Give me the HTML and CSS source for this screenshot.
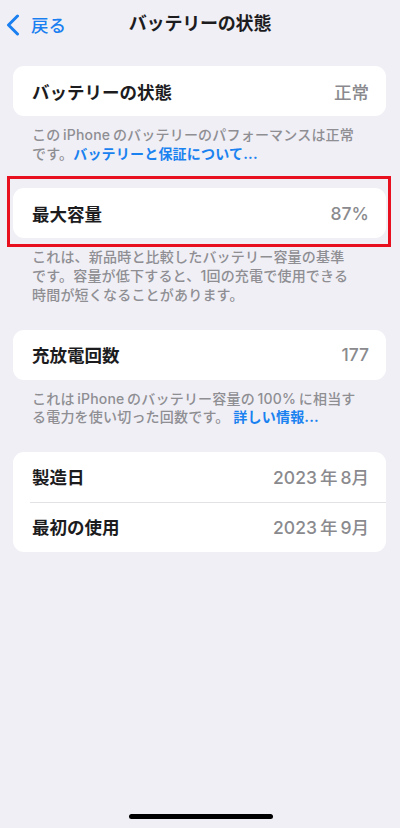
FILE: index.html
```html
<!DOCTYPE html>
<html lang="ja">
<head>
<meta charset="utf-8">
<link rel="stylesheet" href="styles.css">
</head>
<body>
<div class="screen">
  <header class="nav">
    <a class="back">
      <svg class="chev" viewBox="0 0 14 22" width="14" height="22"><path d="M11.5 2 L2.5 11 L11.5 20" fill="none" stroke="#1a7ff0" stroke-width="3" stroke-linecap="round" stroke-linejoin="round"/></svg>
      <span>戻る</span>
    </a>
    <h1 class="title">バッテリーの状態</h1>
  </header>

  <main class="content">
    <section class="group">
      <div class="card">
        <div class="row"><span class="label">バッテリーの状態</span><span class="value">正常</span></div>
      </div>
      <p class="note">この&thinsp;iPhone&thinsp;のバッテリーのパフォーマンスは正常<br>です。<span class="link">バッテリーと保証について...</span></p>
    </section>

    <section class="group">
      <div class="highlight-wrap">
        <div class="card">
          <div class="row"><span class="label">最大容量</span><span class="value">87%</span></div>
        </div>
        <div class="highlight"></div>
      </div>
      <p class="note">これは、新品時と比較したバッテリー容量の基準<br>です。容量が低下すると、1回の充電で使用できる<br>時間が短くなることがあります。</p>
    </section>

    <section class="group">
      <div class="card">
        <div class="row"><span class="label">充放電回数</span><span class="value">177</span></div>
      </div>
      <p class="note">これは&thinsp;iPhone&thinsp;のバッテリー容量の&thinsp;100%&thinsp;に相当す<br>る電力を使い切った回数です。 <span class="link">詳しい情報...</span></p>
    </section>

    <section class="group">
      <div class="card">
        <div class="row"><span class="label">製造日</span><span class="value">2023&thinsp;年&thinsp;8月</span></div>
        <div class="row sep"><span class="label">最初の使用</span><span class="value">2023&thinsp;年&thinsp;9月</span></div>
      </div>
    </section>
  </main>

  <div class="home-indicator"></div>
</div>
</body>
</html>
```

FILE: styles.css
```css
* { box-sizing: border-box; }
html, body { margin: 0; padding: 0; }
body {
  background: #f0eff5;
  font-family: Inter, "Noto Sans CJK JP", sans-serif;
  color: #1c1c1e;
}
.screen {
  width: 400px;
  height: 828px;
  position: relative;
  display: flex;
  flex-direction: column;
}
.nav {
  height: 44px;
  position: relative;
  display: flex;
  align-items: center;
  justify-content: center;
}
.back {
  position: absolute;
  left: 6px;
  top: 12px;
  display: flex;
  align-items: center;
  gap: 11px;
  color: #1a7ff0;
  font-size: 17.5px;
  font-weight: 500;
}
.chev { display: block; }
.title {
  margin: 0;
  font-size: 18px;
  font-weight: 700;
  letter-spacing: -0.2px;
}
.content {
  padding: 22px 14px 0 13px;
  display: flex;
  flex-direction: column;
  gap: 25px;
}
.card {
  background: #fff;
  border-radius: 11px;
}
.row {
  height: 50px;
  display: flex;
  align-items: center;
  justify-content: space-between;
  padding: 0 17px 0 19px;
  font-size: 17.5px;
}
.row.sep {
  position: relative;
}
.row.sep::before {
  content: "";
  position: absolute;
  left: 17px;
  right: 0;
  top: 0;
  height: 1px;
  background: #e2e2e6;
}
.label { font-weight: 700; }
.value { color: #8a8a8e; font-weight: 500; }
.note {
  margin: 0;
  padding: 10px 19px 0 19px;
  font-size: 14px;
  line-height: 18.7px;
  color: #8e8e93;
  letter-spacing: 0.2px;
  font-weight: 500;
}
.link { color: #1a82f0; font-weight: 700; }
.highlight-wrap { position: relative; }
.highlight {
  position: absolute;
  top: -12px;
  bottom: -9px;
  left: -6px;
  right: -5px;
  border: 3px solid #e8101e;
  pointer-events: none;
}
.home-indicator {
  position: absolute;
  left: 129px;
  width: 144px;
  bottom: 9px;
  height: 5px;
  border-radius: 3px;
  background: #000;
}
```
